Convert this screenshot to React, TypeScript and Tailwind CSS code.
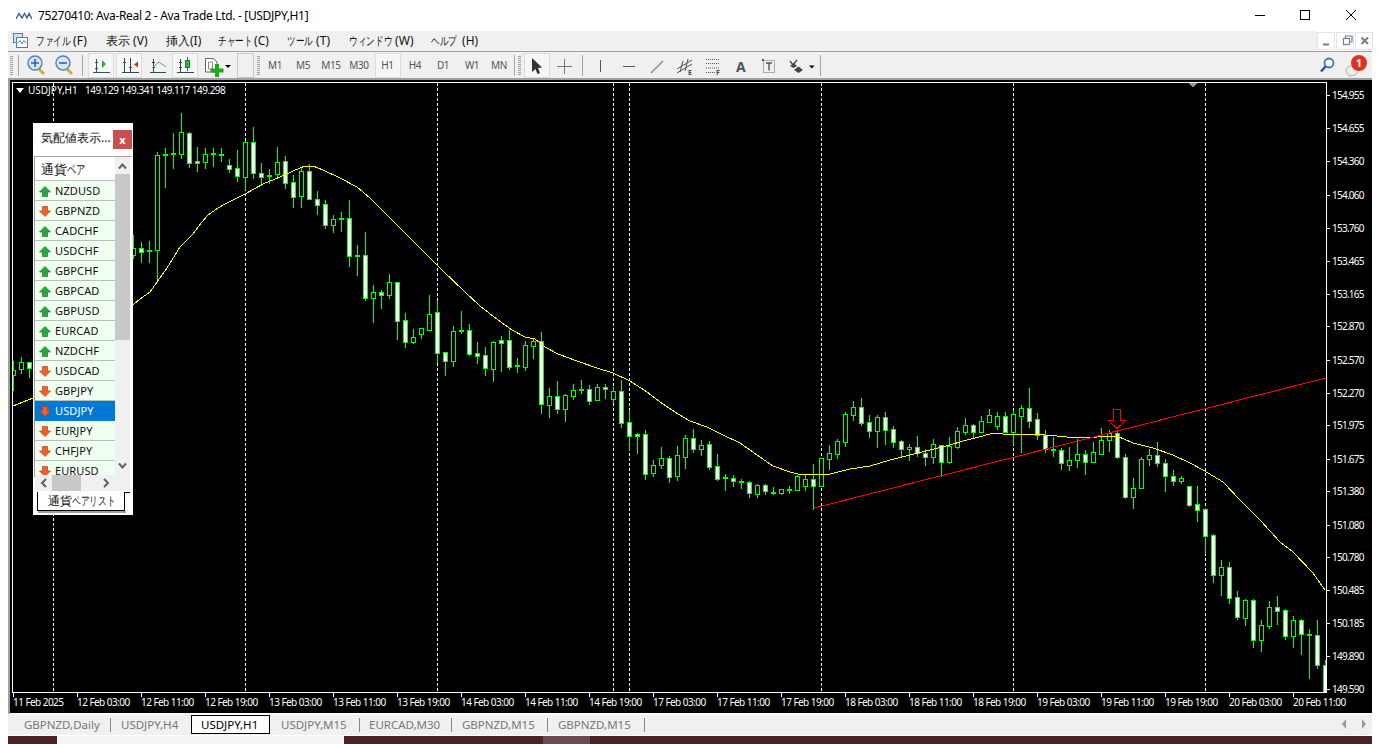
import React from "react";

type C = [number, number, number, number, number, number];
const candles: C[] = [
[13,361,370,375,390,0],[21,357,362,369,373,0],[29,362,362,368,377,1],
[133,235,248,255,258,0],[141,242,248,252,262,1],[149,241,250,251,262,2],[157,152,155,250,282,0],
[165,148,154,155,187,2],[173,133,153,154,168,2],[181,113,132,154,158,0],[189,132,133,163,167,1],[197,147,161,163,171,1],[205,148,154,162,168,0],[213,148,153,154,166,2],[221,148,154,155,161,2],[229,159,165,169,172,1],[237,150,168,176,181,1],[245,141,142,177,189,0],[253,127,142,173,178,1],[261,163,173,177,185,1],[269,169,175,176,183,2],[277,147,162,174,178,0],[285,156,161,183,188,1],[293,175,182,197,207,1],[301,167,171,196,207,0],[309,164,171,199,199,1],[317,191,199,205,214,1],[325,200,204,225,228,1],[333,215,219,225,232,0],[341,212,218,219,231,2],[349,200,218,256,266,1],[357,245,255,256,275,2],[365,232,255,298,300,1],
[373,285,292,298,322,0],[381,290,292,295,308,1],[389,274,282,295,298,0],[397,282,282,321,339,1],[405,313,320,342,347,1],[413,329,337,342,343,0],[421,328,328,334,338,0],[429,295,314,330,330,0],[437,301,312,353,362,1],[445,352,352,361,375,1],[453,326,331,361,366,0],[461,311,330,331,333,2],[469,324,330,354,355,1],[477,342,353,356,363,1],[485,347,355,368,375,1],[493,341,342,369,381,0],[501,336,340,343,371,1],[509,330,340,367,369,1],[517,358,365,366,372,2],[525,341,345,367,370,0],[533,339,341,346,358,0],[541,332,341,404,413,1],[549,388,396,405,417,0],[557,381,396,409,413,1],[565,394,395,409,421,0],[573,384,390,396,399,0],[581,380,389,390,393,2],[589,385,389,401,404,1],[597,384,387,400,400,0],[605,384,387,389,398,1],[613,387,391,399,402,0],[621,380,391,423,427,1],[629,410,422,436,450,1],[637,433,434,436,453,1],[645,430,434,474,479,1],[653,460,465,473,476,0],[661,447,458,465,468,0],[669,456,458,477,482,1],[677,446,455,476,480,0],[685,435,438,457,468,0],
[693,429,438,449,452,1],[701,440,445,449,455,0],[709,441,444,467,469,1],[717,454,466,479,480,1],[725,474,477,478,490,2],[733,475,478,481,486,1],[741,479,481,481,488,2],[749,481,482,493,497,1],[757,484,485,494,497,0],[765,484,485,491,494,1],[773,487,492,492,494,2],[781,489,489,493,494,0],[789,486,489,489,493,2],[797,475,476,490,490,0],[805,474,479,486,490,0],[813,464,479,486,509,1],[821,458,458,486,486,0],[829,445,453,459,469,0],[837,439,441,454,458,0],[845,412,414,442,446,0],[853,401,407,415,420,0],[861,398,407,423,425,1],[869,415,422,431,437,1],[877,415,417,431,447,0],[885,412,417,430,444,1],[893,426,429,442,447,1],[901,440,441,449,456,1],[909,444,447,449,460,0],[917,436,447,453,456,1],[925,449,453,457,465,1],[933,439,444,457,463,0],[941,445,445,462,476,1],[949,437,446,462,463,0],[957,427,431,447,448,0],[965,418,425,432,434,0],[973,424,425,432,438,1],[981,416,421,432,432,0],[989,409,415,422,422,0],[997,412,416,426,429,0],[1005,412,416,432,432,1],[1013,410,414,432,444,0],[1021,405,408,416,452,0],[1029,388,408,421,427,1],
[1037,413,419,435,439,1],[1045,430,435,449,452,1],[1053,437,449,450,456,2],[1061,448,450,463,469,1],[1069,447,460,465,470,0],[1077,439,454,460,467,0],[1085,450,454,462,474,1],[1093,442,452,462,462,0],[1101,428,440,454,454,0],[1109,430,433,440,451,0],[1117,431,433,457,458,1],[1125,454,457,497,498,1],[1133,478,488,497,508,0],[1141,457,459,488,488,0],[1149,449,455,459,465,0],[1157,442,455,463,466,1],[1165,459,463,476,491,1],[1173,470,476,481,485,1],[1181,476,478,481,483,0],[1189,486,486,505,506,1],[1197,486,504,510,521,1],[1205,508,509,536,553,1],[1213,534,535,575,582,1],[1221,560,567,575,595,0],[1229,562,567,598,603,1],[1237,591,597,617,619,1],[1245,599,600,618,625,0],[1253,599,600,640,647,1],[1261,620,625,640,651,0],[1269,601,607,626,628,0],[1277,596,607,611,624,1],[1285,609,610,636,639,1],[1293,616,620,636,647,0],[1301,619,620,634,654,1],[1309,629,634,635,678,2],[1317,620,635,665,668,1],[1325,660,665,692,692,1],
];

const ma = "13,406 33,398 133,305 140,299 150,292 157,282 167,268 180,247 192,235 202,222 208,215 218,208 225,204 245,194 263,184 280,177 293,171 305,166 313,166 323,170 340,178 357,187 370,198 380,208 442,270 465,292 480,306 498,320 512,330 525,337 535,339 545,347 558,354 577,361 597,368 613,373 630,381 647,392 663,404 678,414 690,421 707,427 723,435 740,443 757,455 773,466 790,472 798,474 810,474 820,475 830,474 850,469 870,466 890,460 910,455 930,450 950,445 963,441 983,436 993,433 1003,434 1033,434 1057,436 1067,437 1097,437 1117,436 1133,443 1153,448 1173,455 1190,463 1203,470 1223,482 1240,500 1260,520 1280,542 1293,552 1313,573 1325,590";

const prices: [string, number][] = [["154.955",95],["154.655",128],["154.360",161],["154.060",195],["153.760",228],["153.465",261],["153.165",294],["152.870",326],["152.570",360],["152.270",393],["151.975",425],["151.675",459],["151.380",491],["151.080",525],["150.780",557],["150.485",590],["150.185",623],["149.890",656],["149.590",689]];

const times = ["11 Feb 2025","12 Feb 03:00","12 Feb 11:00","12 Feb 19:00","13 Feb 03:00","13 Feb 11:00","13 Feb 19:00","14 Feb 03:00","14 Feb 11:00","14 Feb 19:00","17 Feb 03:00","17 Feb 11:00","17 Feb 19:00","18 Feb 03:00","18 Feb 11:00","18 Feb 19:00","19 Feb 03:00","19 Feb 11:00","19 Feb 19:00","20 Feb 03:00","20 Feb 11:00"];

const rows: [string, boolean][] = [["NZDUSD",true],["GBPNZD",false],["CADCHF",true],["USDCHF",true],["GBPCHF",true],["GBPCAD",true],["GBPUSD",true],["EURCAD",true],["NZDCHF",true],["USDCAD",false],["GBPJPY",false],["USDJPY",false],["EURJPY",false],["CHFJPY",false],["EURUSD",false]];

const tabs: [string, number][] = [["GBPNZD,Daily",24],["USDJPY,H4",121],["USDJPY,H1",201],["USDJPY,M15",281],["EURCAD,M30",369],["GBPNZD,M15",462],["GBPNZD,M15",558]];

const Arrow = ({ up }: { up: boolean }) => (
  <svg width="12" height="11" viewBox="0 0 12 11" className="absolute left-[4px] top-[5px]">
    {up ? (
      <path d="M6 0.5 L11.5 6 L8.5 6 L8.5 10.5 L3.5 10.5 L3.5 6 L0.5 6 Z" fill="#27a843" stroke="#0f7a2a" strokeWidth="0.7" />
    ) : (
      <path d="M6 10.5 L11.5 5 L8.5 5 L8.5 0.5 L3.5 0.5 L3.5 5 L0.5 5 Z" fill="#f0602a" stroke="#c03c10" strokeWidth="0.7" />
    )}
  </svg>
);

const Box = ({ l, w = 26 }: { l: number; w?: number }) => (
  <div className="absolute top-[53px] h-[25px] border border-[#dcdcdc] bg-[#f6f6f6]" style={{ left: l, width: w }} />
);

const Sep = ({ l }: { l: number }) => <div className="absolute top-[55px] h-[21px] w-px bg-[#a8a8a8]" style={{ left: l }} />;

const Grip = ({ l }: { l: number }) => (
  <div className="absolute top-[56px] h-[20px] w-[3px] bg-[repeating-linear-gradient(to_bottom,#a0a0a0_0,#a0a0a0_1px,#f0f0f0_1px,#f0f0f0_2px)]" style={{ left: l }} />
);

const Kana = ({ t, w }: { t: string; w: number }) => (
  <span className="inline-block origin-left scale-x-[0.72] whitespace-nowrap align-baseline" style={{ width: w }}>{t}</span>
);

export default function App() {
  const sans = "font-['Liberation_Sans','Noto_Sans_CJK_JP',sans-serif]";
  const menu = "absolute top-[33px] text-[12px] leading-[15px] whitespace-nowrap text-[#111]";
  return (
    <div className={`relative h-[744px] w-[1382px] overflow-hidden bg-white ${sans} text-black`}>
      {/* title bar */}
      <svg width="16" height="8" viewBox="0 0 16 8" className="absolute left-[16px] top-[12px]">
        <path d="M0 7 L3 1.5 L6 6 L8.5 1.5 L11 6 L13 1.5 L16 7" fill="none" stroke="#3e5f8e" strokeWidth="1.4" />
      </svg>
      <div className="absolute left-[38px] top-[8px] text-[12px] leading-[15px] whitespace-nowrap tracking-[-0.33px]">75270410: Ava-Real 2 - Ava Trade Ltd. - [USDJPY,H1]</div>
      <svg width="130" height="14" viewBox="0 0 130 14" className="absolute left-[1250px] top-[8px]">
        <path d="M5 7.5 H15" stroke="#000" strokeWidth="1" />
        <rect x="50.5" y="2.5" width="9" height="9" fill="none" stroke="#000" strokeWidth="1" />
        <path d="M96 2 L106 12 M106 2 L96 12" stroke="#000" strokeWidth="1" />
      </svg>

      {/* menu bar */}
      <div className="absolute left-[8px] top-[31px] h-[20px] w-[1309px] bg-[#f0f0f0]" />
      <svg width="15" height="15" viewBox="0 0 15 15" className="absolute left-[13px] top-[33px]">
        <rect x="0.5" y="0.5" width="9" height="9" fill="#cfe2f6" stroke="#4a7fb8" />
        <rect x="3.5" y="4.5" width="11" height="10" fill="#fff" stroke="#4a7fb8" />
        <path d="M5 10 L7 7.5 L9 11 L11 7.5 L13 10" fill="none" stroke="#4a8fc0" />
      </svg>
      <div className={`${menu} left-[36px]`}><Kana t="ファイル" w={34} /> (F)</div>
      <div className={`${menu} left-[106px]`}>表示 (V)</div>
      <div className={`${menu} left-[166px]`}>挿入(I)</div>
      <div className={`${menu} left-[218px]`}><Kana t="チャート" w={33} /> (C)</div>
      <div className={`${menu} left-[287px]`}><Kana t="ツール" w={26} /> (T)</div>
      <div className={`${menu} left-[349px]`}><Kana t="ウィンドウ" w={43} /> (W)</div>
      <div className={`${menu} left-[431px]`}><Kana t="ヘルプ" w={28} /> (H)</div>

      {/* MDI buttons */}
      <div className="absolute left-[1317px] top-[32px] h-[18px] w-[18px] border border-[#e4e4e4] bg-white" />
      <div className="absolute left-[1336px] top-[32px] h-[18px] w-[18px] border border-[#e4e4e4] bg-white" />
      <div className="absolute left-[1355px] top-[32px] h-[18px] w-[18px] border border-[#e4e4e4] bg-white" />
      <svg width="60" height="18" viewBox="0 0 60 18" className="absolute left-[1317px] top-[32px]">
        <path d="M6 12.5 H12" stroke="#708090" strokeWidth="2" />
        <rect x="26.5" y="6.5" width="6" height="6" fill="none" stroke="#708090" strokeWidth="1.2" />
        <path d="M28.5 6 V4 H35 V10 H33" fill="none" stroke="#708090" strokeWidth="1.2" />
        <path d="M44.5 5.5 L51 12 M51 5.5 L44.5 12" stroke="#708090" strokeWidth="2" />
      </svg>

      {/* toolbar */}
      <div className="absolute left-[8px] top-[51px] h-[1px] w-[1364px] bg-[#a0a0a0]" />
      <div className="absolute left-[8px] top-[52px] h-[26px] w-[1364px] bg-[#f0f0f0]" />
      <div className="absolute left-[8px] top-[78px] h-[2px] w-[1364px] bg-[#a0a0a0]" />
      <Grip l={10} />
      <Sep l={18} />
      <Sep l={82} />
      <Box l={88} />
      <Box l={116} />
      <Box l={172} />
      <div className="absolute left-[237px] top-[53px] h-[25px] w-[17px] border border-[#c8c8c8] bg-[#f0f0f0]" />
      <Grip l={257} />
      <Box l={375} />
      <Sep l={514} />
      <Grip l={518} />
      <Box l={524} />
      <Sep l={582} />
      <Sep l={820} />

      <svg width="240" height="26" viewBox="0 0 240 26" className="absolute left-[20px] top-[52px]">
        {/* zoom in */}
        <path d="M19 17 L24 22" stroke="#d8a850" strokeWidth="3" />
        <circle cx="15" cy="11" r="7" fill="#d5e4f6" stroke="#5580b8" strokeWidth="1.4" />
        <path d="M11 11 H19 M15 7 V15" stroke="#2f62b0" strokeWidth="1.6" />
        {/* zoom out */}
        <path d="M47 17 L52 22" stroke="#d8a850" strokeWidth="3" />
        <circle cx="43" cy="11" r="7" fill="#d5e4f6" stroke="#5580b8" strokeWidth="1.4" />
        <path d="M39 11 H47" stroke="#2f62b0" strokeWidth="1.6" />
        {/* bars */}
        <path d="M73 20.5 H90 M76.5 7 V20 M75 10.5 H78 M75 16.5 H78" stroke="#2a5a58" strokeWidth="1" fill="none" />
        <path d="M82 8 L86 12 L82 16 Z" fill="#2fae3a" />
        <path d="M102 20.5 H119 M104.5 6 V20 M110.5 6 V20 M103 10.5 H106 M109 15.5 H112" stroke="#2a4a58" strokeWidth="1" fill="none" />
        <path d="M118 9.5 L114 12.5 L118 15.5 Z" fill="#c83020" />
        {/* line */}
        <path d="M130 20.5 H146 M133.5 7 V20 M132 10.5 H135 M132 15.5 H135" stroke="#2a4a58" strokeWidth="1" fill="none" />
        <path d="M132 16 L139 10 L146 15" fill="none" stroke="#5cb060" strokeWidth="1" />
        {/* candle */}
        <path d="M157 20.5 H174 M160.5 7 V20 M159 10.5 H162 M159 15.5 H162" stroke="#2a4a58" strokeWidth="1" fill="none" />
        <path d="M167.5 5 V19" stroke="#2f6b40" />
        <rect x="165.5" y="8.5" width="4" height="7" fill="#22c030" stroke="#1a7a30" />
        {/* new chart */}
        <path d="M185.5 6.5 H193 L197 10 V20 H185.5 Z" fill="#fff" stroke="#666" />
        <path d="M188.5 10 H192.5 V17 H188.5 Z" fill="none" stroke="#888" />
        <path d="M197 12 V25 M190.5 18.5 H203.5" stroke="#20a820" strokeWidth="4" />
        <path d="M205 13 H211 L208 16 Z" fill="#000" />
      </svg>

      {([["M1",275],["M5",303],["M15",331],["M30",359],["H1",387.5],["H4",415],["D1",443],["W1",472],["MN",499]] as [string, number][]).map(([t, x]) => (
        <div key={t} className="absolute top-[59px] w-[28px] text-center text-[10px] leading-[13px] tracking-[-0.4px] text-[#555]" style={{ left: x - 14 }}>{t}</div>
      ))}

      <svg width="310" height="26" viewBox="0 0 310 26" className="absolute left-[525px] top-[52px]">
        <path d="M7 6 L7 20 L10.5 17 L12.5 22 L15 21 L13 16 L17 15.5 Z" fill="#333" />
        <path d="M32 14.5 H47 M39.5 7 V22" stroke="#777" strokeWidth="1" />
        <path d="M75.5 8 V20" stroke="#555" strokeWidth="1" />
        <path d="M98 14.5 H110" stroke="#555" strokeWidth="1" />
        <path d="M126 21 L138 9" stroke="#888" strokeWidth="1.2" />
        {/* channel E */}
        <path d="M152 17 L167 8 M152 21 L167 12 M155 20 L158 9 M160 19 L163 7" stroke="#555" strokeWidth="1" />
        {/* fib F */}
        <path d="M181 7.5 H194 M181 11.5 H194 M181 16 H194 M181 20.5 H190" stroke="#555" strokeWidth="1" strokeDasharray="1 1" />
        {/* text frame */}
        <rect x="238.5" y="8.5" width="11" height="12" fill="none" stroke="#666" strokeDasharray="1 1" />
        <rect x="237" y="7" width="2" height="2" fill="#555" />
        <path d="M241 11 H247 M244 11 V18.5" stroke="#555" strokeWidth="1.4" />
        {/* arrows */}
        <path d="M265 9 L268 13 L272 8" fill="none" stroke="#444" strokeWidth="1.3" />
        <path d="M265 14 L268.5 11 L272 14 L268.5 16 Z M269 18 L273.5 14.5 L278 18 L273.5 21 Z" fill="#444" />
        <path d="M284 13.5 H289.5 L286.75 16.5 Z" fill="#000" />
      </svg>
      <div className="absolute left-[736px] top-[59px] text-[14px] leading-[16px] font-bold text-[#555]">A</div>
      <div className="absolute left-[688px] top-[69px] text-[7px] leading-[8px] font-bold text-[#444]">E</div>
      <div className="absolute left-[716px] top-[69px] text-[7px] leading-[8px] font-bold text-[#444]">F</div>

      {/* search + notification */}
      <svg width="50" height="26" viewBox="0 0 50 26" className="absolute left-[1318px] top-[52px]">
        <circle cx="11" cy="11" r="4.5" fill="#fff" stroke="#3a70d0" strokeWidth="1.8" />
        <path d="M7.5 14.5 L3 19.5" stroke="#2858b0" strokeWidth="2.6" />
        <path d="M28 19 a6 5 0 1 1 5 4.5 l-2 1 l0 -2 a6 5 0 0 1 -3 -3.5z" fill="#ececec" stroke="#b0b0b0" />
        <circle cx="41" cy="11" r="8" fill="#e03020" />
      </svg>
      <div className="absolute left-[1355px] top-[56px] w-[8px] text-center text-[11px] leading-[14px] font-bold text-white">1</div>

      {/* chart frame */}
      <div className="absolute left-[8px] top-[78px] h-[636px] w-[2px] bg-[#a0a0a0]" />
      <div className="absolute left-[10px] top-[80px] h-[633px] w-[1362px] bg-black" />
      <div className="absolute left-[12px] top-[82px] h-[611px] w-[1315px] border border-white" />
      <svg width="1313" height="609" viewBox="13 83 1313 609" shapeRendering="crispEdges" className="absolute left-[13px] top-[83px]">
        {[53, 245, 437, 613, 629, 821, 1013, 1205].map((x) => (
          <line key={x} x1={x + 0.5} x2={x + 0.5} y1={83} y2={692} stroke="#fff" strokeDasharray="3 2" />
        ))}
        {candles.map(([x, h, t, b, l, k]) => (
          <g key={x}>
            <line x1={x + 0.5} x2={x + 0.5} y1={h} y2={l + 1} stroke="#00ff00" />
            {k === 2 ? (
              <rect x={x - 2} y={t} width={5} height={2} fill="#00ff00" />
            ) : (
              <rect x={x - 1.5} y={t + 0.5} width={4} height={Math.max(b - t, 2)} fill={k ? "#fff" : "#000"} stroke="#00ff00" />
            )}
          </g>
        ))}
        <polyline points={ma} fill="none" stroke="#ffff00" strokeWidth="1" />
        <line x1={814} y1={508} x2={1326} y2={378} stroke="#ff0000" strokeWidth="1" />
        <polygon points="1113.5,409.5 1120.5,409.5 1120.5,420.5 1125.5,420.5 1117,428.5 1108.5,420.5 1113.5,420.5" fill="none" stroke="#ff0000" />
        <polygon points="1189,83 1197,83 1193,88" fill="#7d96ab" />
      </svg>
      <svg width="8" height="5" viewBox="0 0 8 5" className="absolute left-[16px] top-[88px]"><path d="M0 0 H8 L4 5 Z" fill="#fff" /></svg>
      <div className="absolute left-[28px] top-[84px] text-[10px] leading-[13px] whitespace-pre text-white">USDJPY,H1</div>
      <div className="absolute left-[85px] top-[84px] text-[10px] leading-[13px] tracking-[-0.5px] whitespace-pre text-white">149.129 149.341 149.117 149.298</div>

      {prices.map(([p, y]) => (
        <React.Fragment key={p}>
          <div className="absolute left-[1327px] h-px w-[3px] bg-white" style={{ top: y }} />
          <div className="absolute left-[1332px] text-[10px] leading-[12px] tracking-[-0.75px] text-white" style={{ top: y - 6 }}>{p}</div>
        </React.Fragment>
      ))}
      {times.map((t, i) => (
        <React.Fragment key={t}>
          <div className="absolute top-[693px] h-[4px] w-px bg-white" style={{ left: 13 + i * 64 }} />
          <div className="absolute top-[696px] text-[10px] leading-[12px] tracking-[-0.55px] whitespace-nowrap text-white" style={{ left: 13 + i * 64 }}>{t}</div>
        </React.Fragment>
      ))}

      {/* market watch */}
      <div className="absolute left-[33px] top-[123px] h-[392px] w-[100px] bg-white">
        <div className="absolute left-[8px] top-[7px] text-[12px] leading-[16px] whitespace-nowrap text-[#111]">気配値表示...</div>
        <div className="absolute left-[80px] top-[7px] flex h-[19px] w-[19px] items-center justify-center bg-[#c75050] text-[11px] leading-none font-bold text-white">x</div>
        <div className="absolute left-[1px] top-[33px] h-[1px] w-[98px] bg-[#a0a0a0]" />
        <div className="absolute left-[1px] top-[34px] h-[320px] w-px bg-[#a0a0a0]" />
        <div className="absolute left-[8px] top-[38px] text-[13px] leading-[16px] whitespace-nowrap text-[#111]">通貨<Kana t="ペア" w={18} /></div>
        <div className="absolute left-[2px] top-[34px] h-[318px] w-[80px] overflow-hidden">
          {rows.map(([r, up], i) => (
            <div
              key={r}
              className={`absolute left-0 h-[20px] w-[80px] ${r === "USDJPY" ? "bg-[#0078d7] text-white" : "border-b border-[#b8c0b8] bg-[#f0fff0] text-[#111]"}`}
              style={{ top: 24 + i * 20 }}
            >
              <Arrow up={up} />
              <span className="absolute left-[20px] top-[2px] text-[11px] leading-[16px] tracking-[0.1px]">{r}</span>
            </div>
          ))}
          <div className="absolute left-0 top-[23px] h-px w-[80px] bg-[#b8c0b8]" />
        </div>
        {/* vertical scrollbar */}
        <div className="absolute left-[82px] top-[34px] h-[318px] w-[15px] bg-[#f0f0f0]" />
        <div className="absolute left-[82px] top-[51px] h-[166px] w-[15px] bg-[#c8c8c8]" />
        <svg width="100" height="360" viewBox="0 0 100 360" className="absolute left-0 top-0">
          <path d="M86 45.5 L89.5 41.5 L93 45.5" fill="none" stroke="#606060" strokeWidth="2" />
          <path d="M86 340.5 L89.5 344.5 L93 340.5" fill="none" stroke="#606060" strokeWidth="2" />
        </svg>
        {/* horizontal scrollbar */}
        <div className="absolute left-[2px] top-[352px] h-[16px] w-[95px] bg-[#f0f0f0]" />
        <div className="absolute left-[19px] top-[352px] h-[16px] w-[29px] bg-[#c8c8c8]" />
        <svg width="100" height="20" viewBox="0 0 100 20" className="absolute left-0 top-[350px]">
          <path d="M13 6 L9 10 L13 14" fill="none" stroke="#606060" strokeWidth="2" />
          <path d="M71 6 L75 10 L71 14" fill="none" stroke="#606060" strokeWidth="2" />
        </svg>
        {/* tab */}
        <div className="absolute left-[4px] top-[369px] h-[19px] w-[88px] border-r border-b border-l border-black bg-white pl-[10px] text-[12px] leading-[17px] whitespace-nowrap text-[#111]">
          通貨<Kana t="ペアリスト" w={43} />
        </div>
        <div className="absolute left-[92px] top-[369px] h-px w-[5px] bg-black" />
        <div className="absolute left-[5px] top-[388px] h-[2px] w-[88px] bg-[#a0a0a0]" />
      </div>

      {/* tab bar */}
      <div className="absolute left-[8px] top-[715px] h-[20px] w-[1364px] bg-[#f0f0f0]" />
      <div className="absolute left-[191px] top-[715px] h-[19px] w-[79px] border border-black bg-white" />
      {[110, 359, 451, 547, 644].map((x) => (
        <div key={x} className="absolute top-[718px] h-[14px] w-px bg-[#888]" style={{ left: x }} />
      ))}
      {tabs.map(([t, x], i) => (
        <div key={i} className={`absolute top-[717px] text-[11.5px] leading-[16px] whitespace-nowrap ${i === 2 ? "text-black" : "text-[#777]"}`} style={{ left: x }}>{t}</div>
      ))}
      <svg width="30" height="10" viewBox="0 0 30 10" className="absolute left-[1340px] top-[719px]">
        <path d="M6 0 L2 5 L6 10 Z M22 0 L26 5 L22 10 Z" fill="#9a9a9a" />
      </svg>

      {/* desktop strip */}
      <div className="absolute left-[8px] top-[736px] h-[8px] w-[1364px] bg-[#4a2329]" />
      <div className="absolute left-[57px] top-[736px] h-[8px] w-[287px] bg-[#f4f4f4]" />
      <div className="absolute left-[543px] top-[736px] h-[8px] w-[47px] bg-[#6b4a50]" />
    </div>
  );
}
